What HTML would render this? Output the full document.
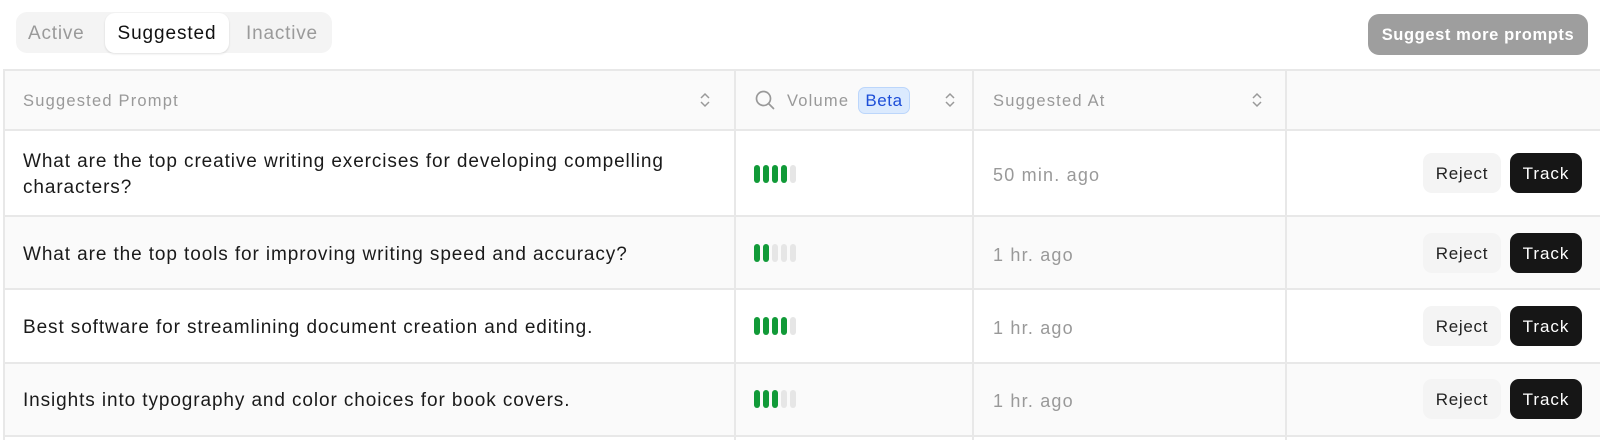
<!DOCTYPE html>
<html><head><meta charset="utf-8"><style>
*{box-sizing:border-box;margin:0;padding:0}
body{width:1600px;height:440px;background:#fff;font-family:"Liberation Sans",sans-serif;position:relative;overflow:hidden;color:#1a1a1a}
.abs{position:absolute}
.tabs{left:16px;top:12px;width:316px;height:41px;background:#f4f4f4;border-radius:11px}
.tab{position:absolute;top:1px;height:41px;line-height:41px;font-size:19px;letter-spacing:0.8px;color:#9a9a9a}
.pill{left:89px;top:1px;width:124px;height:40px;background:#fff;border-radius:10px;box-shadow:0 1px 2px rgba(0,0,0,.12);text-align:center;line-height:42px;color:#111;font-size:19px;letter-spacing:0.9px}
.btn{left:1368px;top:14px;width:220px;height:41px;background:#9e9e9e;border-radius:11px;color:#fff;font-size:16.5px;letter-spacing:0.6px;font-weight:bold;text-align:center;line-height:42px}
.hline{left:4px;right:0;height:2px;background:#e8e8e8}
.vline{width:2px;background:#e8e8e8}
.row{left:4px;right:0}
.h{font-size:16.5px;letter-spacing:1.2px;color:#999}
.t{font-size:19px;letter-spacing:0.9px;color:#1a1a1a;left:23px;line-height:26px}
.time{font-size:18px;letter-spacing:1.2px;color:#999;left:993px}
.bars{left:754px;height:18px}
.bars i{position:absolute;top:0;width:6px;height:18px;border-radius:3px;background:#e6e6e6}
.rej{left:1423px;width:78px;height:40px;background:#f4f4f4;border-radius:9px;font-size:17px;letter-spacing:0.7px;text-align:center;line-height:41px;color:#222}
.trk{left:1510px;width:72px;height:40px;background:#161616;border-radius:9px;font-size:17px;letter-spacing:1px;text-align:center;line-height:41px;color:#fff}
.sort{width:12px;height:18px}
</style></head><body>
<div class="abs tabs">
<div class="tab" style="left:12px">Active</div>
<div class="abs pill">Suggested</div>
<div class="tab" style="left:230px">Inactive</div>
</div>
<div class="abs btn">Suggest more prompts</div>

<div class="abs row" style="top:70px;height:60px;background:#fafafa"></div>
<div class="abs row" style="top:216px;height:73px;background:#fafafa"></div>
<div class="abs row" style="top:363px;height:73px;background:#fafafa"></div>

<div class="abs hline" style="top:69px"></div>
<div class="abs hline" style="top:129px"></div>
<div class="abs hline" style="top:215px"></div>
<div class="abs hline" style="top:288px"></div>
<div class="abs hline" style="top:362px"></div>
<div class="abs hline" style="top:435px"></div>
<div class="abs vline" style="left:3px;top:69px;height:371px"></div>
<div class="abs vline" style="left:734px;top:69px;height:371px"></div>
<div class="abs vline" style="left:972px;top:69px;height:371px"></div>
<div class="abs vline" style="left:1285px;top:69px;height:371px"></div>

<div class="abs h" style="left:23px;top:92px">Suggested Prompt</div>
<svg class="abs sort" style="left:699px;top:91px" viewBox="0 0 12 18"><path d="M2 7l4-4 4 4M2 11l4 4 4-4" fill="none" stroke="#999" stroke-width="1.5"/></svg>
<svg class="abs" style="left:754px;top:89px" width="22" height="22" viewBox="0 0 22 22"><circle cx="9.5" cy="9.5" r="7" fill="none" stroke="#999" stroke-width="1.7"/><path d="M14.5 14.5l5 5" stroke="#999" stroke-width="1.7" stroke-linecap="round"/></svg>
<div class="abs h" style="left:787px;top:92px">Volume</div>
<div class="abs" style="left:858px;top:87px;width:52px;height:27px;background:#dbeafe;border:1px solid #bcd6fb;border-radius:7px;color:#1d4ed8;font-size:17px;letter-spacing:0.6px;text-align:center;line-height:26px">Beta</div>
<svg class="abs sort" style="left:944px;top:91px" viewBox="0 0 12 18"><path d="M2 7l4-4 4 4M2 11l4 4 4-4" fill="none" stroke="#999" stroke-width="1.5"/></svg>
<div class="abs h" style="left:993px;top:92px">Suggested At</div>
<svg class="abs sort" style="left:1251px;top:91px" viewBox="0 0 12 18"><path d="M2 7l4-4 4 4M2 11l4 4 4-4" fill="none" stroke="#999" stroke-width="1.5"/></svg>

<div class="abs t" style="top:149px">What are the top creative writing exercises for developing compelling<br>characters?</div>
<div class="abs t" style="top:242px">What are the top tools for improving writing speed and accuracy?</div>
<div class="abs t" style="top:315px">Best software for streamlining document creation and editing.</div>
<div class="abs t" style="top:388px">Insights into typography and color choices for book covers.</div>

<div class="abs bars" style="top:165px"><i style="left:0;background:#119a38"></i><i style="left:9px;background:#119a38"></i><i style="left:18px;background:#119a38"></i><i style="left:27px;background:#119a38"></i><i style="left:36px"></i></div>
<div class="abs bars" style="top:244px"><i style="left:0;background:#119a38"></i><i style="left:9px;background:#119a38"></i><i style="left:18px"></i><i style="left:27px"></i><i style="left:36px"></i></div>
<div class="abs bars" style="top:317px"><i style="left:0;background:#119a38"></i><i style="left:9px;background:#119a38"></i><i style="left:18px;background:#119a38"></i><i style="left:27px;background:#119a38"></i><i style="left:36px"></i></div>
<div class="abs bars" style="top:390px"><i style="left:0;background:#119a38"></i><i style="left:9px;background:#119a38"></i><i style="left:18px;background:#119a38"></i><i style="left:27px"></i><i style="left:36px"></i></div>

<div class="abs time" style="top:165px">50 min. ago</div>
<div class="abs time" style="top:245px">1 hr. ago</div>
<div class="abs time" style="top:318px">1 hr. ago</div>
<div class="abs time" style="top:391px">1 hr. ago</div>

<div class="abs rej" style="top:153px">Reject</div><div class="abs trk" style="top:153px">Track</div>
<div class="abs rej" style="top:233px">Reject</div><div class="abs trk" style="top:233px">Track</div>
<div class="abs rej" style="top:306px">Reject</div><div class="abs trk" style="top:306px">Track</div>
<div class="abs rej" style="top:379px">Reject</div><div class="abs trk" style="top:379px">Track</div>
</body></html>
